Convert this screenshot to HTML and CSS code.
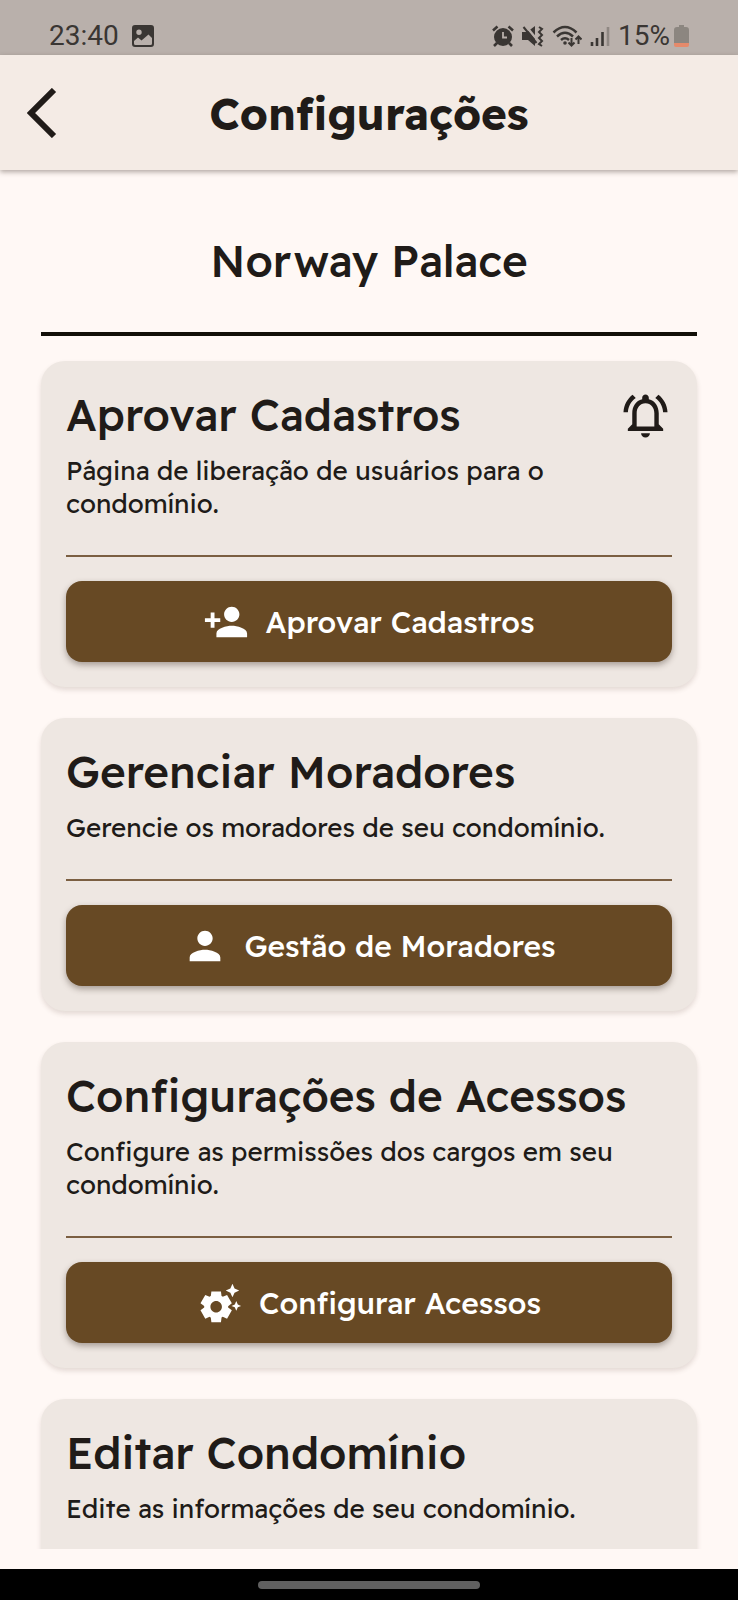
FILE: index.html
```html
<!DOCTYPE html>
<html lang="pt-BR">
<head>
<meta charset="utf-8">
<meta name="viewport" content="width=device-width, initial-scale=1">
<title>Configurações</title>
<link rel="stylesheet" href="styles.css">
</head>
<body>
<div class="status-bar">
  <div class="status-left">
    <span>23:40</span>
    <svg class="status-photo" viewBox="0 0 22 22" aria-hidden="true"><path fill="currentColor" fill-rule="evenodd" d="M3 0h16a3 3 0 0 1 3 3v16a3 3 0 0 1-3 3H3a3 3 0 0 1-3-3V3a3 3 0 0 1 3-3zM7 4.500a2.700 2.700 0 1 0 0 5.400 2.700 2.700 0 0 0 0-5.400zM2 16v2.500Q2 20 3.500 20h15q1.500 0 1.500-1.500V13l-3.500-3.500-7 6L6 12.500z"/></svg>
  </div>
  <div class="status-right">
    <svg width="22" height="22" viewBox="0 0 22 22" aria-hidden="true"><circle cx="11" cy="12" r="9" fill="currentColor"/><path d="M1 5.500l4.500-4M21 5.500l-4.500-4M5 18l-3 3M17 18l3 3" stroke="currentColor" stroke-width="2.600"/><path d="M11 7v5.500h4" fill="none" stroke="#b9b0ab" stroke-width="1.800"/></svg>
    <svg class="mute" width="22" height="22" viewBox="0 0 22 22" aria-hidden="true"><path d="M0 7h5l8-6v20l-7-6H0z" fill="currentColor"/><path d="M3 0l14 17" stroke="#b9b0ab" stroke-width="2.400"/><path d="M1.500 2l13 16" stroke="currentColor" stroke-width="2"/><path d="M17 2l3 2-3 3 3 3-3 3 3 3-3 3 3 2" fill="none" stroke="currentColor" stroke-width="2"/></svg>
    <svg width="30" height="24" viewBox="0 0 30 24" aria-hidden="true"><g fill="none" stroke="currentColor" stroke-width="2.500"><path d="M1.500 8.500q11.500-11 23 0M5 12.500q8-7.500 16 0M9 16q4-3.500 8 0"/><path d="M19.500 14v7M16.500 18.500l3 3 3-3M26.500 20v-7M23.500 15.500l3-3 3 3" stroke-width="2"/></g><circle cx="13" cy="19" r="1.800" fill="currentColor"/></svg>
    <svg width="20" height="22" viewBox="0 0 20 22" aria-hidden="true"><path d="M2 17v4M7 13v8M12.500 7v14" stroke="currentColor" stroke-width="2.600"/><path d="M18 2v19" stroke="#8f8883" stroke-width="2.600"/></svg>
    <span class="battery-text">15%</span>
    <svg width="15" height="22" viewBox="0 0 15 22" aria-hidden="true"><path d="M5 0h5v2h2a3 3 0 0 1 3 3v13H0V5a3 3 0 0 1 3-3h2z" fill="#8c8680"/><path d="M0 18h15v2a2 2 0 0 1-2 2H2a2 2 0 0 1-2-2z" fill="#e58a6b"/></svg>
  </div>
</div>

<header class="app-bar">
  <button class="back" type="button" aria-label="Voltar">
    <svg width="30" height="50" viewBox="0 0 30 50" aria-hidden="true"><path d="M27 2 4 25l23 23" fill="none" stroke="currentColor" stroke-width="6"/></svg>
  </button>
  <h1>Configurações</h1>
</header>

<main class="content">
  <h2 class="place">Norway Palace</h2>
  <div class="cards">
    <section class="card">
      <div class="card-head">
        <h3>Aprovar Cadastros</h3>
        <svg class="bell" viewBox="0 0 24 24" aria-hidden="true"><path fill="currentColor" d="M12 22c1.100 0 2-.9 2-2h-4c0 1.100.9 2 2 2zm6-6v-5c0-3.070-1.630-5.640-4.500-6.320V4c0-.83-.67-1.500-1.500-1.500s-1.500.67-1.500 1.500v.68C7.640 5.360 6 7.920 6 11v5l-2 2v1h16v-1l-2-2zm-2 1H8v-6c0-2.480 1.510-4.500 4-4.500s4 2.020 4 4.500v6zM7.580 4.080L6.150 2.650C3.750 4.480 2.170 7.300 2.030 10.500h2c.15-2.650 1.510-4.970 3.550-6.420zm12.390 6.420h2c-.15-3.200-1.730-6.020-4.120-7.850l-1.420 1.430c2.020 1.450 3.390 3.770 3.540 6.420z"/></svg>
      </div>
      <p>Página de liberação de usuários para o condomínio.</p>
      <hr>
      <button class="action" type="button">
        <svg viewBox="0 0 24 24" aria-hidden="true"><path fill="currentColor" d="M15 12c2.210 0 4-1.790 4-4s-1.790-4-4-4-4 1.790-4 4 1.790 4 4 4zm-9-2V7H4v3H1v2h3v3h2v-3h3v-2H6zm9 4c-2.670 0-8 1.340-8 4v2h16v-2c0-2.660-5.330-4-8-4z"/></svg>
        Aprovar Cadastros
      </button>
    </section>

    <section class="card">
      <div class="card-head"><h3>Gerenciar Moradores</h3></div>
      <p>Gerencie os moradores de seu condomínio.</p>
      <hr>
      <button class="action" type="button">
        <svg viewBox="0 0 24 24" aria-hidden="true"><path fill="currentColor" d="M12 12c2.210 0 4-1.790 4-4s-1.790-4-4-4-4 1.790-4 4 1.790 4 4 4zm0 2c-2.670 0-8 1.340-8 4v2h16v-2c0-2.660-5.330-4-8-4z"/></svg>
        Gestão de Moradores
      </button>
    </section>

    <section class="card">
      <div class="card-head"><h3>Configurações de Acessos</h3></div>
      <p>Configure as permissões dos cargos em seu condomínio.</p>
      <hr>
      <button class="action" type="button">
        <svg viewBox="0 0 24 24" aria-hidden="true"><path fill="currentColor" d="M17.410 6.590 15 5.500l2.410-1.090L18.500 2l1.090 2.410L22 5.500l-2.410 1.090L18.500 9l-1.090-2.410zm3.870 6.130L20.500 11l-.78 1.720-1.720.78 1.720.78.78 1.720.78-1.720L23 13.500l-1.720-.78zm-5.040 1.650 1.940 1.470-2.500 4.330-2.240-.94c-.2.13-.42.26-.64.37l-.3 2.400h-5l-.3-2.410c-.22-.11-.43-.23-.64-.37l-2.240.94-2.500-4.330 1.940-1.470c-.01-.11-.01-.24-.01-.36s0-.25.01-.37l-1.940-1.470 2.500-4.330 2.240.94c.2-.13.42-.26.64-.37L7.500 6h5l.3 2.410c.22.11.43.23.64.37l2.240-.94 2.500 4.330-1.940 1.470c.01.12.01.24.01.37s0 .24-.01.36zM13 14c0-1.660-1.340-3-3-3s-3 1.340-3 3 1.340 3 3 3 3-1.340 3-3z"/></svg>
        Configurar Acessos
      </button>
    </section>

    <section class="card card-cut">
      <div class="card-head"><h3>Editar Condomínio</h3></div>
      <p>Edite as informações de seu condomínio.</p>
    </section>
  </div>
</main>

<div class="nav-bar"><span class="nav-pill"></span></div>
</body>
</html>
```

FILE: styles.css
```css
* {
  box-sizing: border-box;
}

body {
  margin: 0;
  height: 100vh;
  display: flex;
  flex-direction: column;
  background: #fff8f5;
  color: #201b18;
  font-family: "Readex Pro", Lexend, Inter, sans-serif;
}

h1, h2, h3, p {
  margin: 0;
}

svg {
  display: block;
  flex: none;
}

.status-bar {
  flex: none;
  height: 55px;
  padding: 17px 49px 0 49px;
  display: flex;
  justify-content: space-between;
  align-items: flex-start;
  background: #b9b0ab;
  color: #3a3633;
  font: 28px/38px Roboto, sans-serif;
}

.status-left,
.status-right {
  display: flex;
  align-items: center;
}

.status-left {
  gap: 13px;
}

.status-photo {
  width: 22px;
  height: 22px;
}

.status-right {
  gap: 8px;
}

.status-right .battery-text {
  margin-right: -4px;
}

.app-bar {
  flex: none;
  height: 115px;
  display: grid;
  grid-template-columns: 84px 1fr 84px;
  align-items: center;
  background: #f4ebe5;
  box-shadow: 0 2px 5px rgba(60, 45, 35, 0.4);
  z-index: 1;
}

.app-bar h1 {
  padding-top: 2px;
  font-size: 44px;
  line-height: 56px;
  font-weight: 700;
  text-align: center;
}

.back {
  justify-self: center;
  padding: 0;
  border: 0;
  background: none;
  color: inherit;
}

.content {
  flex: 1;
  min-height: 0;
  display: flex;
  flex-direction: column;
  padding: 0 41px 20px;
}

.place {
  flex: none;
  padding: 63px 0 43px;
  border-bottom: 4px solid #120f08;
  font-size: 44px;
  line-height: 56px;
  font-weight: 500;
  text-align: center;
}

.cards {
  flex: 1;
  min-height: 0;
  display: flex;
  flex-direction: column;
  gap: 31px;
  margin: 0 -41px;
  padding: 25px 41px 0;
  overflow: hidden;
}

.card {
  flex: none;
  padding: 25px;
  border-radius: 24px;
  background: #eee7e2;
  box-shadow: 0 3px 5px rgba(90, 65, 50, 0.16);
}

.card-cut {
  padding-bottom: 80px;
}

.card-head {
  display: flex;
  justify-content: space-between;
  align-items: center;
}

.card h3 {
  font-size: 44px;
  line-height: 58px;
  font-weight: 500;
  white-space: nowrap;
}

.bell {
  width: 53px;
  height: 53px;
}

.card p {
  margin-top: 10px;
  font-size: 26px;
  line-height: 33px;
}

.card hr {
  height: 2px;
  margin: 35px 0 24px;
  border: 0;
  background: #7b5f42;
}

.action {
  display: flex;
  align-items: center;
  justify-content: center;
  gap: 16px;
  width: 100%;
  height: 81px;
  padding: 0;
  border: 0;
  border-radius: 16px;
  background: #674924;
  color: #fff;
  box-shadow: 0 3px 6px rgba(60, 45, 35, 0.4);
  font: inherit;
  font-size: 30px;
  line-height: 36px;
  font-weight: 500;
}

.action svg {
  width: 46px;
  height: 46px;
}

.nav-bar {
  flex: none;
  height: 31px;
  display: flex;
  align-items: center;
  justify-content: center;
  background: #000;
}

.nav-pill {
  width: 30%;
  height: 8px;
  border-radius: 4px;
  background: #606060;
}
```
